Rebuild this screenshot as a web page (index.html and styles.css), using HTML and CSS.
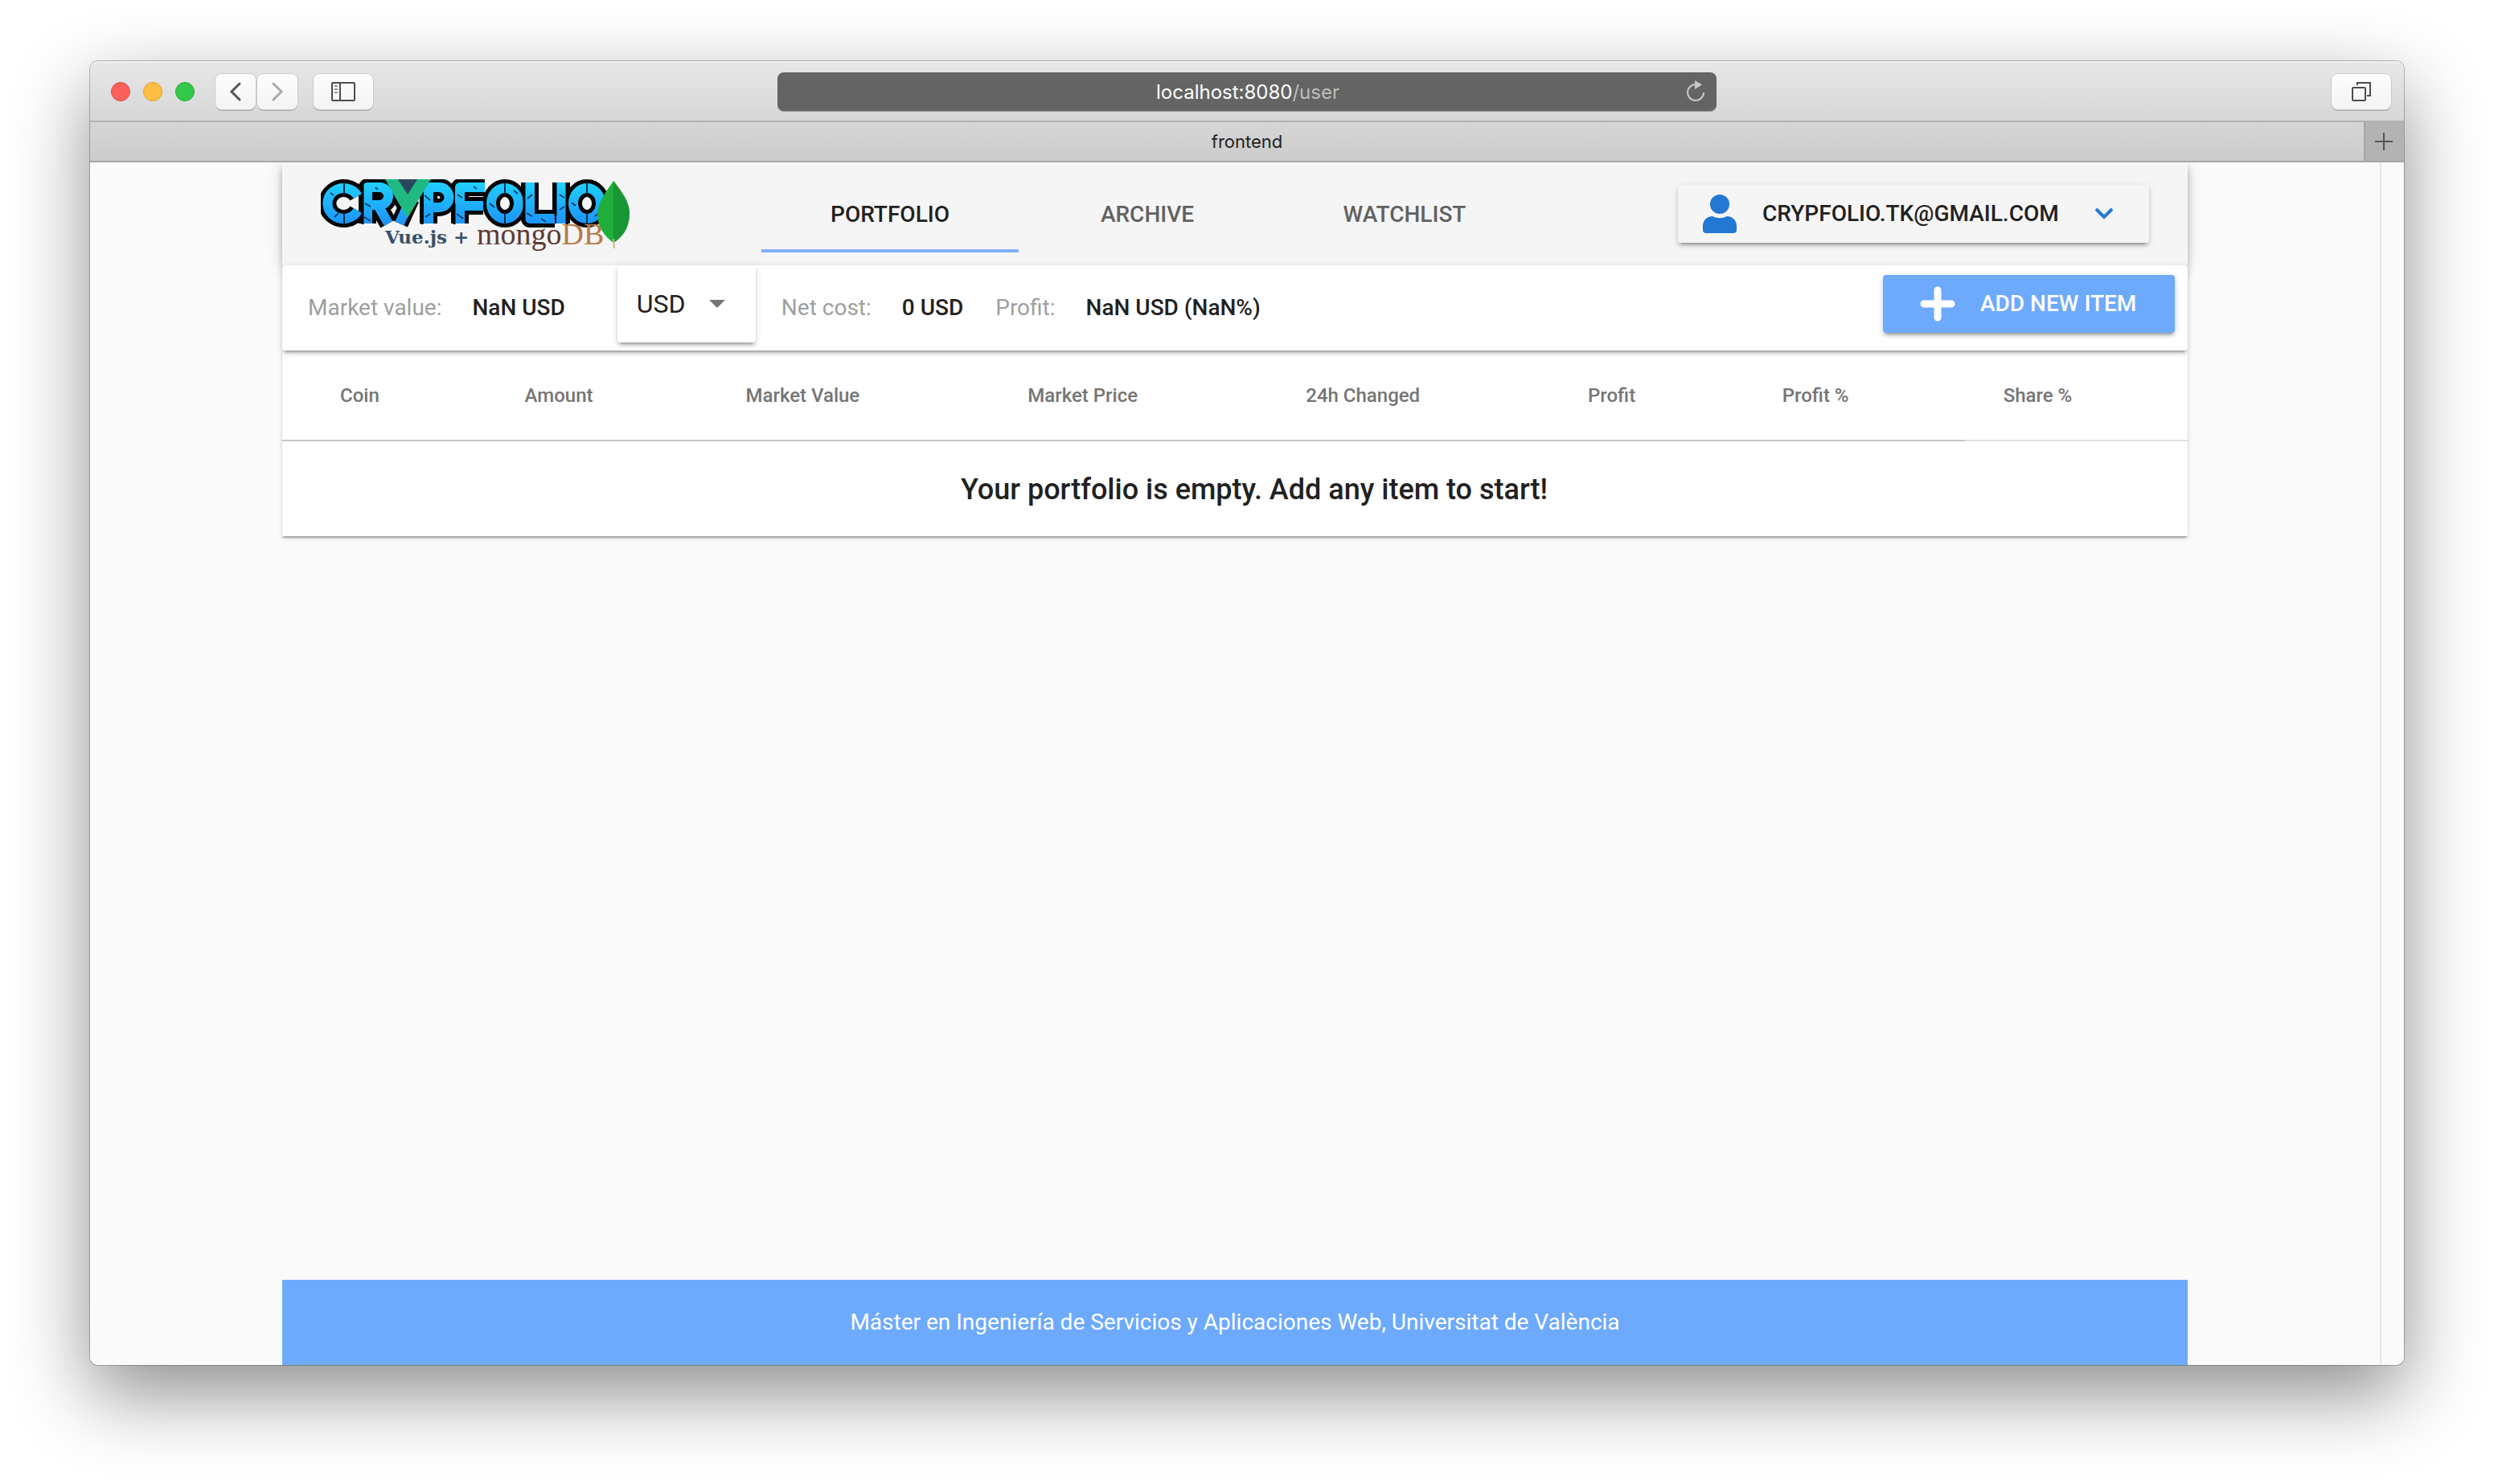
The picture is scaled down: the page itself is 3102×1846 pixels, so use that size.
FILE: index.html
```html
<!DOCTYPE html>
<html lang="es">
<head>
<meta charset="utf-8">
<title>frontend</title>
<link rel="stylesheet" href="styles.css">
</head>
<body>
<div class="browser">
  <div class="toolbar">
    <div class="toolbar-side">
      <div class="lights"><span class="light red"></span><span class="light amber"></span><span class="light green"></span></div>
      <div class="history">
        <button class="chrome-btn" aria-label="Back"><svg width="50" height="44" viewBox="0 0 50 44"><path d="M30 12 20 22l10 10" fill="none" stroke="#555" stroke-width="3" stroke-linecap="round"/></svg></button>
        <button class="chrome-btn" aria-label="Forward"><svg width="50" height="44" viewBox="0 0 50 44"><path d="M20 12 30 22 20 32" fill="none" stroke="#aaa" stroke-width="3" stroke-linecap="round"/></svg></button>
      </div>
      <button class="chrome-btn wide" aria-label="Sidebar"><svg width="30" height="24" viewBox="0 0 30 24"><rect x="1" y="1" width="28" height="22" rx="1" fill="none" stroke="#4d4d4d" stroke-width="2"/><path d="M11 1v22" stroke="#4d4d4d" stroke-width="2"/><path d="M4 5h4M4 9h4M4 13h4" stroke="#999" stroke-width="2"/></svg></button>
    </div>
    <div class="address">
      <span class="url">localhost:8080<span class="path">/user</span></span>
      <button class="reload" aria-label="Reload"><svg width="24" height="26" viewBox="0 0 24 26"><path d="M12 5A10 10 0 1 0 22 15" fill="none" stroke="#c8c8c8" stroke-width="2"/><path d="M11 0l9 5.500-9 5.500z" fill="#c8c8c8"/></svg></button>
    </div>
    <div class="toolbar-side end">
      <button class="chrome-btn wide" aria-label="Tabs"><svg width="24" height="24" viewBox="0 0 24 24" fill="none" stroke="#4d4d4d" stroke-width="2"><rect x="1" y="7" width="16" height="16" rx="1"/><path d="M7 4V1h16v16h-4"/></svg></button>
    </div>
  </div>
  <div class="tabbar">
    <span class="tab-title">frontend</span>
    <button class="new-tab" aria-label="New tab"><svg width="22" height="22" viewBox="0 0 22 22"><path d="M11 0v22M0 11h22" stroke="#555" stroke-width="2"/></svg></button>
  </div>
  <div class="viewport">
    <div class="page">
      <header class="app-bar">
        <a class="logo" href="#" aria-label="Crypfolio">
          <svg width="384" height="86" viewBox="0 0 384 86">
            <defs>
              <linearGradient id="sky" gradientUnits="userSpaceOnUse" x1="0" y1="4" x2="0" y2="56"><stop offset="0" stop-color="#1fd0ff"/><stop offset="1" stop-color="#1d93fb"/></linearGradient>
              <clipPath id="frame"><rect width="384" height="86"/></clipPath>
              <g id="word" fill="none" stroke-linejoin="round">
                <path d="M46 21A20 19 0 1 0 46 39"/>
                <path d="M58 55V10h15a10 10 0 0 1 0 22H62M72 34 84 55"/>
                <path d="M89 4 104 30 119 4M112 24 98 55"/>
                <path d="M134 55V10h13a12 12 0 0 1 0 25h-13"/>
                <path d="M173 55V10h31M173 33h29"/>
                <ellipse cx="229" cy="30" rx="17" ry="19"/>
                <path d="M260 4V49h31"/>
                <path d="M299 4V55"/>
                <ellipse cx="331" cy="30" rx="17" ry="19"/>
              </g>
            </defs>
            <g clip-path="url(#frame)">
              <use href="#word" stroke="#050505" stroke-width="22"/>
              <use href="#word" stroke="url(#sky)" stroke-width="12"/>
              <path d="M12 17l4 3M17 47l5-5M55 30l7 4M54 47l8 5M68 10l3 3M129 20l7 6M130 47l6-4M170 19l6 4M169 43l8 6M190 9l4 3M210 30l6 5M240 14l5 4M257 24l6-5M256 42l7 4M274 49l6 4M297 19l6 4M297 38l6-4M312 29l5 4M341 46l5-4" stroke="#07436b" stroke-width="2"/>
              <path d="M29 4v13M29 43v13M229 4v13M229 43v13M331 4v13M331 43v13" stroke="#07314d" stroke-width="2"/>
              <path d="M52 4v52M126 4v52M166 30v26M253 4v52M292 4v42M306 4v52" stroke="#050505" stroke-width="3"/>
            </g>
            <path d="M80 0h57L108 48z" fill="#1fb981"/><path d="M96 0h24L108 19z" fill="#2b4660"/>
            <text x="80" y="80" class="logo-vue">Vue.js</text>
            <text x="165" y="80" class="logo-vue">+</text>
            <text x="194" y="81" class="logo-mongo">mongo<tspan fill="#b87a4b">DB</tspan></text>
            <path d="M364 2C376 18 384 28 384 44 383 62 375 72 364 79 352 70 345 60 344 44 345 27 354 17 364 2Z" fill="#1fae3c"/>
            <path d="M364 2C376 18 384 28 384 44 383 62 375 72 364 79Z" fill="#189633"/>
            <path d="M364 74l1 12" stroke="#c9b78c" stroke-width="2"/>
          </svg>
        </a>
        <nav class="tabs">
          <a class="tab active" href="#">PORTFOLIO</a>
          <a class="tab" href="#">ARCHIVE</a>
          <a class="tab" href="#">WATCHLIST</a>
        </nav>
        <button class="user-btn">
          <svg width="42" height="48" viewBox="0 0 42 48" fill="#2278d2"><ellipse cx="21" cy="12" rx="12" ry="12"/><path d="M0 44V39C0 32 5 27 12 27 18 30 24 30 30 27 37 27 42 32 42 39V44Q42 48 38 48H4Q0 48 0 44Z"/></svg>
          <span>CRYPFOLIO.TK@GMAIL.COM</span>
          <svg class="chevron" width="24" height="16" viewBox="0 0 24 16"><path d="M2 2l10 10L22 2" fill="none" stroke="#2278d2" stroke-width="4"/></svg>
        </button>
      </header>
      <section class="summary">
        <span class="label first">Market value:</span>
        <span class="value">NaN USD</span>
        <div class="currency">
          <select aria-label="Currency"><option>USD</option></select>
          <svg width="20" height="10" viewBox="0 0 20 10"><path d="M0 0h20L10 10z" fill="#757575"/></svg>
        </div>
        <span class="label">Net cost:</span>
        <span class="value">0 USD</span>
        <span class="label">Profit:</span>
        <span class="value">NaN USD (NaN%)</span>
        <button class="add-btn">
          <svg width="42" height="42" viewBox="0 0 42 42"><path d="M21 4v34M4 21h34" stroke="#fff" stroke-width="9" stroke-linecap="round"/></svg>
          <span>ADD NEW ITEM</span>
        </button>
      </section>
      <table class="holdings">
        <colgroup><col class="c-coin"><col class="c-amount"><col class="c-value"><col class="c-price"><col class="c-change"><col class="c-profit"><col class="c-percent"><col></colgroup>
        <thead><tr><th>Coin</th><th>Amount</th><th>Market Value</th><th>Market Price</th><th>24h Changed</th><th>Profit</th><th>Profit %</th><th>Share %</th></tr></thead>
        <tbody><tr><td colspan="8">Your portfolio is empty. Add any item to start!</td></tr></tbody>
      </table>
      <footer class="footer">Máster en Ingeniería de Servicios y Aplicaciones Web, Universitat de València</footer>
    </div>
    <div class="scroll-track"></div>
  </div>
</div>
</body>
</html>
```
FILE: styles.css
```css
* { box-sizing: border-box; }
body {
  margin: 0;
  min-height: 100vh;
  padding: 76px 112px 148px;
  display: flex;
  background: #fff;
  color: #212121;
  font: 28px/40px Roboto, sans-serif;
}
button { margin: 0; padding: 0; border: 0; font: inherit; color: inherit; background: none; }
a { color: inherit; text-decoration: none; }
svg { display: block; overflow: visible; }

.browser {
  flex: 1;
  min-width: 0;
  display: flex;
  flex-direction: column;
  border-radius: 10px;
  box-shadow: 0 0 0 1px rgba(0, 0, 0, .24), 0 36px 96px rgba(0, 0, 0, .45);
}
.toolbar {
  height: 76px;
  display: grid;
  grid-template-columns: 1fr 1168px 1fr;
  align-items: center;
  border-radius: 10px 10px 0 0;
  border-top: 2px solid #f0f0f0;
  border-bottom: 2px solid #b1b1b1;
  background: linear-gradient(#e7e7e7, #d6d6d6);
}
.toolbar-side { display: flex; align-items: center; gap: 20px; padding-left: 26px; }
.toolbar-side.end { justify-content: flex-end; padding: 0 16px 0 0; }
.lights { display: flex; gap: 16px; margin-right: 6px; }
.light { width: 24px; height: 24px; border-radius: 50%; border: 1px solid; }
.red { background: #fc605b; border-color: #e14942; }
.amber { background: #fdbe41; border-color: #dfa023; }
.green { background: #34c84a; border-color: #27aa35; }
.history { display: flex; gap: 2px; }
.chrome-btn {
  width: 50px;
  height: 44px;
  display: flex;
  align-items: center;
  justify-content: center;
  border-radius: 8px;
  background: linear-gradient(#fdfdfd, #f3f3f3);
  box-shadow: 0 0 0 1px #cacaca, 0 2px 0 #ababab;
}
.chrome-btn.wide { width: 74px; }
.address {
  height: 48px;
  position: relative;
  display: flex;
  align-items: center;
  justify-content: center;
  padding: 2px 0 0 2px;
  border-radius: 8px;
  background: #646464;
  box-shadow: 0 1px 0 #999;
  color: #fff;
  font: 24px/32px Inter, sans-serif;
}
.path { color: #bdbdbd; }
.reload { position: absolute; right: 14px; top: 10px; }
.tabbar {
  height: 50px;
  display: grid;
  grid-template-columns: 50px 1fr 50px;
  border-bottom: 2px solid #a6a6a6;
  background: linear-gradient(#d6d6d6, #cbcbcb);
  font: 22px/48px Inter, sans-serif;
}
.tab-title { grid-column: 2; text-align: center; }
.new-tab {
  display: flex;
  align-items: center;
  justify-content: center;
  padding-right: 2px;
  border-left: 2px solid #a5a5a5;
  background: #b3b3b3;
}
.viewport {
  flex: 1;
  display: flex;
  background: #fafafa;
  border-radius: 0 0 10px 10px;
  overflow: hidden;
}
.page { flex: 1; min-width: 0; padding: 0 239px; display: flex; flex-direction: column; }
.scroll-track { width: 30px; border-left: 2px solid #e8e8e8; }

.app-bar {
  height: 128px;
  padding: 0 48px;
  display: flex;
  align-items: center;
  background: #f5f5f5;
  box-shadow: 0 4px 8px -2px rgba(0, 0, 0, .2), 0 8px 10px rgba(0, 0, 0, .14), 0 2px 20px rgba(0, 0, 0, .12);
}
.tabs { display: flex; margin-left: 164px; }
.tab {
  width: 320px;
  height: 96px;
  padding-top: 5px;
  border-bottom: 4px solid transparent;
  color: #616161;
  font-weight: 500;
  line-height: 88px;
  text-align: center;
}
.tab.active { color: #212121; border-color: #82b1ff; }
.user-btn {
  width: 586px;
  height: 72px;
  margin-left: auto;
  padding: 0 44px 0 31px;
  display: flex;
  align-items: center;
  font-weight: 500;
  border-radius: 4px;
}
.user-btn span { margin-left: 32px; }
.chevron { margin-left: auto; }
.user-btn, .summary, .currency, .add-btn {
  box-shadow: 0 6px 2px -4px rgba(0, 0, 0, .2), 0 4px 4px rgba(0, 0, 0, .14), 0 2px 10px rgba(0, 0, 0, .12);
}
.logo-vue { font: bold 23px "DejaVu Serif", serif; fill: #34506b; }
.logo-mongo { font: 34px "DejaVu Serif", "Liberation Serif", serif; font-family: "Liberation Serif", serif; font-size: 38px; fill: #5e3a33; }

.summary {
  position: relative;
  height: 106px;
  padding-right: 16px;
  display: flex;
  align-items: center;
  background: #fff;
  border-radius: 4px;
}
.label { margin-left: 40px; color: #9e9e9e; }
.label.first { margin-left: 32px; }
.value { margin-left: 38px; font-weight: 500; }
.currency {
  width: 172px;
  height: 96px;
  margin: 0 -8px 0 65px;
  padding: 0 38px 0 24px;
  display: flex;
  align-items: center;
  justify-content: space-between;
  align-self: flex-start;
  border-radius: 4px;
}
.currency select { appearance: none; padding: 0; border: 0; background: none; color: inherit; font: 32px/40px Roboto, sans-serif; }
.add-btn {
  width: 363px;
  height: 72px;
  margin: 12px 0 0 auto;
  padding-left: 47px;
  display: flex;
  align-items: center;
  align-self: flex-start;
  gap: 32px;
  border-radius: 4px;
  background: #6daafd;
  color: #fff;
  font-weight: 500;
}

.holdings {
  width: 100%;
  table-layout: fixed;
  border-collapse: separate;
  border-spacing: 0;
  background: #fff;
  box-shadow: 0 4px 2px -2px rgba(0, 0, 0, .2), 0 2px 2px rgba(0, 0, 0, .14), 0 2px 6px rgba(0, 0, 0, .12);
}
.c-coin { width: 10.7%; }
.c-amount { width: 11.6%; }
.c-value { width: 14.8%; }
.c-price { width: 14.6%; }
.c-change { width: 14.8%; }
.c-profit { width: 10.2%; }
.c-percent { width: 11.6%; }
.holdings th {
  height: 113px;
  padding: 0 0 0 48px;
  border-bottom: 2px solid #c6c6c6;
  color: #757575;
  font-size: 24px;
  font-weight: 500;
  text-align: left;
}
.holdings th:first-child { padding-left: 72px; }
.holdings th:last-child { border-color: #e0e0e0; }
.holdings td {
  height: 118px;
  padding: 2px 48px 0 96px;
  font-size: 36px;
  font-weight: 500;
  text-align: center;
}
.footer {
  height: 106px;
  margin-top: auto;
  background: #6daafd;
  color: #fff;
  line-height: 106px;
  text-align: center;
}
```
